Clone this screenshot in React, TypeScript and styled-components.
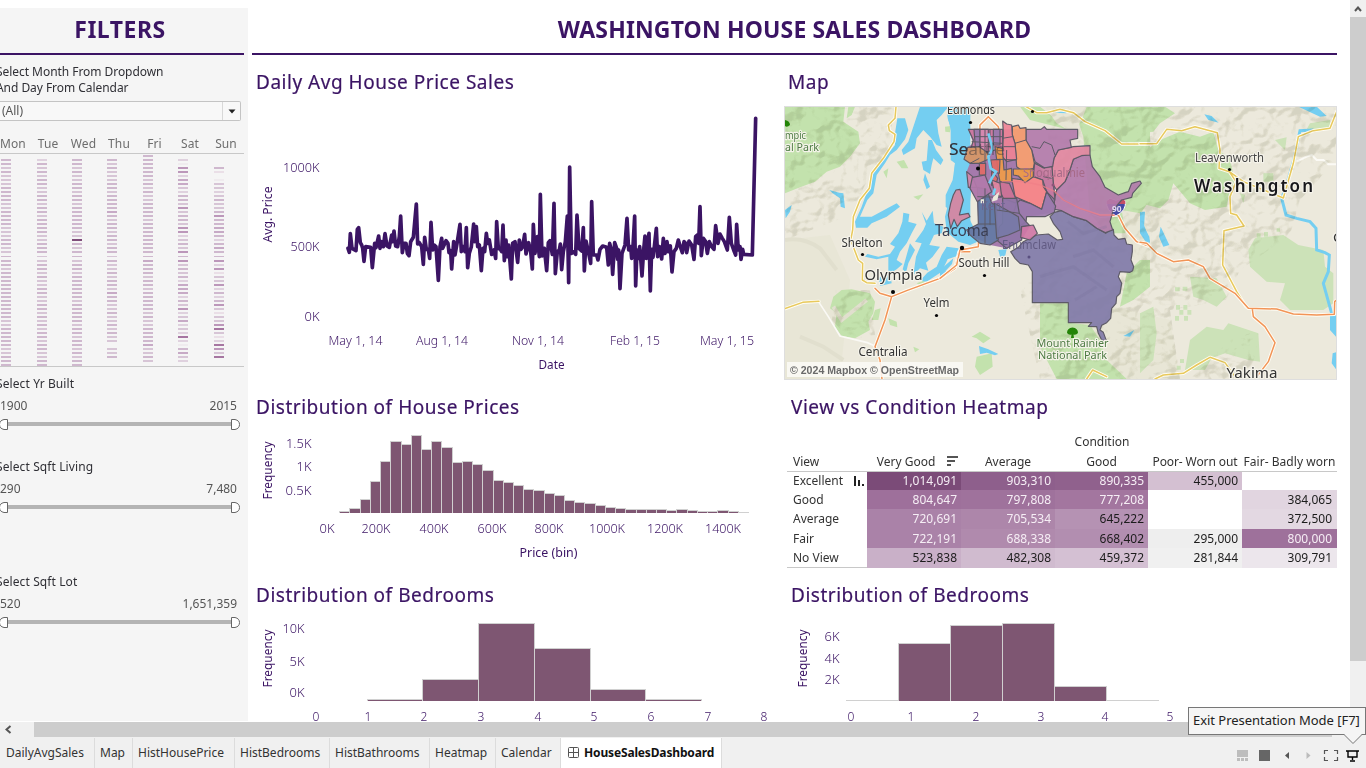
import React from "react";
import styled, { createGlobalStyle } from "styled-components";

const INK = "#3b1464";
const BAR = "#7e5672";
const SANS = '"Noto Sans", "Open Sans", sans-serif';

const GlobalStyle = createGlobalStyle`
  * { box-sizing: border-box; }
  body { margin: 0; background: #fff; font-family: ${SANS}; overflow: hidden; }
  svg { display: block; }
`;

const Page = styled.div`
  width: 1366px;
  height: 768px;
  display: grid;
  grid-template-rows: 722px 16px 30px;
  overflow: hidden;
  background: #fff;
`;
const Viewport = styled.div`
  display: grid;
  grid-template-columns: 248px 1fr 16px;
  overflow: hidden;
`;

/* ---------- filters ---------- */
const Filters = styled.aside`
  margin-top: 8px;
  height: 713px;
  background: #f5f5f5;
  overflow: hidden;
`;
const BarTitle = styled.h1<{ $space: number; $w: number; $indent?: number }>`
  margin: 0;
  height: 47px;
  width: ${(p) => p.$w}px;
  padding-right: ${(p) => p.$indent ?? 0}px;
  border-bottom: 2px solid ${INK};
  font-size: 23px;
  font-weight: 700;
  line-height: 43px;
  letter-spacing: ${(p) => p.$space}px;
  text-align: center;
  white-space: nowrap;
  color: ${INK};
`;
const FilterText = styled.p<{ $top?: number; $space?: number }>`
  margin: ${(p) => p.$top ?? 0}px 0 0 -4px;
  font-size: 12px;
  line-height: 16px;
  letter-spacing: ${(p) => p.$space ?? 0.1}px;
  color: #2f2f35;
  white-space: pre-line;
`;
const Dropdown = styled.div`
  margin-top: 5px;
  width: 241px;
  height: 20px;
  display: flex;
  border: 1px solid #c4c4c4;
  border-left: 0;
  border-radius: 0 2px 2px 0;
  background: #f8f8f8;
  font-size: 12px;
  line-height: 18px;
  color: #555;
`;
const DropdownValue = styled.span`
  flex: 1;
  padding-left: 2px;
`;
const DropdownArrow = styled.span`
  width: 18px;
  display: flex;
  align-items: center;
  justify-content: center;
  border-left: 1px solid #d8d8d8;
`;
const Days = styled.div`
  width: 244px;
  height: 20px;
  margin-top: 13px;
  display: grid;
  grid-template-columns: 30px 36px 35px 36px 35px 36px 36px;
  border-bottom: 1px solid #c8c8c8;
  font-size: 12px;
  line-height: 20px;
  letter-spacing: 0.1px;
  color: #6d6d6d;
  text-align: center;
  white-space: nowrap;

  span:first-child { text-align: left; }
`;
const Range = styled.div<{ $top: number }>`
  margin-top: ${(p) => p.$top}px;
  height: 60px;
`;
const RangeValues = styled.div`
  width: 237px;
  display: flex;
  justify-content: space-between;
  margin-top: 5px;
  font-size: 12px;
  line-height: 18px;
  color: #555;
`;
const SliderTrack = styled.svg`
  margin-top: 1px;
`;

const CAL = [
  "05545444555544555544455445554555555555555445555544555",
  "03545455445545545555445554455454455445545454554554455",
  "05545445545545555554495455455455555545555545545545455",
  "05454445545555654554554554544545546554454454544044500",
  "55555545454455554555555555655545545555545445555644540",
  "03177366435547455477345475745453666354734634383156430",
  "00052014434544575566535655737244735357424478423874800",
];
const CAL_X = [1, 37, 72, 107, 143, 178, 214];
const LEVEL = ["", "#efebee", "#eadfe7", "#dfd1de", "#d7c5d6", "#cfb8ce", "#c7aac6", "#bc97ba", "#a676a1", "#7f4d7a"];

function Calendar() {
  return (
    <svg width="248" height="213" viewBox="0 154 248 213" shapeRendering="crispEdges">
      {CAL.map((col, c) =>
        col.split("").map((v, r) => {
          if (v === "0") return null;
          const y = r < 25 ? 155 + r * 4 : r === 25 ? 256 : 260 + (r - 26) * 4;
          return <rect key={r} x={CAL_X[c]} y={y} width="10" height={r === 25 ? 1 : 2} fill={LEVEL[Number(v)]} />;
        })
      )}
      <rect x="0" y="366" width="244" height="1" fill="#c8c8c8" />
    </svg>
  );
}

function RangeFilter({ title, min, max, top }: { title: string; min: string; max: string; top: number }) {
  return (
    <Range $top={top}>
      <FilterText>{title}</FilterText>
      <RangeValues>
        <span>{min}</span>
        <span>{max}</span>
      </RangeValues>
      <SliderTrack width="248" height="16" viewBox="0 0 248 16">
        <rect x="7" y="6" width="225" height="4" fill="#b4b4b4" />
        <path d="M7.500 3.500H4Q-.5 4.500-.5 8.500Q-.5 12.500 4 13.500H7.500Z" fill="#fff" stroke="#666" />
        <path d="M231.500 3.500H235Q239.500 4.500 239.500 8.500Q239.500 12.500 235 13.500H231.500Z" fill="#fff" stroke="#666" />
      </SliderTrack>
    </Range>
  );
}

/* ---------- dashboard ---------- */
const Dashboard = styled.main`
  padding: 8px 13px 0 4px;
  overflow: hidden;
`;
const Grid = styled.div`
  display: grid;
  grid-template-columns: 532px 553px;
  grid-template-rows: 325px 188px 154px;
`;
const Panel = styled.section`
  padding-top: 9px;
  overflow: hidden;
`;
const PanelTitle = styled.h2<{ $left: number; $space?: number }>`
  margin: 0;
  height: 36px;
  padding-left: ${(p) => p.$left}px;
  font-size: 19px;
  font-weight: 400;
  line-height: 36px;
  letter-spacing: ${(p) => p.$space ?? 0.52}px;
  color: ${INK};
  -webkit-text-stroke: 0.2px ${INK};
  white-space: nowrap;
`;

type LabelProps = {
  x: number; y: number; w?: number; anchor?: "start" | "middle" | "end";
  size?: number; fill?: string; weight?: number; rotate?: boolean; children: string;
};
function Label({ x, y, w, anchor = "middle", size = 12, fill = INK, weight = 400, rotate, children }: LabelProps) {
  return (
    <text x={x} y={y} textLength={w} lengthAdjust="spacingAndGlyphs" textAnchor={anchor} fontSize={size} fill={fill}
      fontWeight={weight} transform={rotate ? `rotate(-90 ${x} ${y})` : undefined}>
      {children}
    </text>
  );
}
function Tick(props: LabelProps) {
  return <Label weight={300} {...props} />;
}

const SERIES =
  "294,565 298,577 301,521 306,565 318,572 322,508 326,503 331,548 335,555 338,565 342,604 347,560 362,562 367,623 374,550 378,563 386,528 390,565 395,545 400,560 405,521 411,558 418,562 425,525 428,545 432,513 437,558 443,560 448,530 452,468 457,578 462,550 468,550 472,580 477,587 482,545 490,532 499,432 503,552 508,548 515,560 520,613 524,532 529,568 535,568 539,595 543,487 548,570 552,555 558,560 565,661 570,560 575,535 578,565 588,542 594,550 597,578 602,572 605,627 611,545 615,585 622,545 630,493 634,575 640,560 645,575 649,503 653,623 658,580 664,560 671,492 674,545 679,500 683,560 688,555 694,632 699,565 704,575 709,520 713,550 718,540 725,583 732,570 737,595 740,485 745,565 751,568 755,575 759,495 763,602 768,540 771,590 776,555 784,657 788,550 795,545 803,607 808,540 813,568 818,560 824,523 828,582 836,548 842,575 847,627 850,493 855,580 862,530 868,590 871,403 876,588 883,565 890,632 895,548 900,542 907,583 912,430 916,641 922,575 928,570 931,552 935,629 940,575 946,545 952,468 956,668 959,321 964,580 972,575 977,583 981,465 987,565 995,573 1000,503 1003,633 1008,543 1015,575 1022,610 1025,425 1030,585 1040,585 1044,600 1050,568 1058,558 1070,562 1075,615 1079,550 1084,570 1088,643 1094,548 1100,565 1103,598 1106,570 1110,686 1116,580 1125,555 1131,475 1136,570 1142,560 1145,595 1149,560 1154,468 1157,678 1161,570 1165,595 1169,560 1172,595 1176,648 1181,570 1185,528 1189,595 1193,555 1197,520 1201,693 1205,568 1209,592 1213,560 1219,505 1223,590 1228,560 1235,597 1240,535 1245,580 1251,545 1255,575 1261,558 1266,636 1272,575 1279,565 1285,540 1291,560 1297,578 1302,545 1307,550 1310,578 1317,543 1325,555 1332,598 1337,530 1342,525 1346,550 1350,440 1354,587 1360,535 1367,545 1372,580 1378,545 1385,560 1392,568 1397,497 1404,550 1410,522 1417,535 1423,545 1432,570 1438,472 1444,550 1451,570 1457,585 1460,493 1465,570 1470,560 1473,598 1478,568 1481,583 1507,585 1517,175";

function PriceLine() {
  return (
    <svg width="532" height="280" viewBox="252 100 532 280">
      <Tick x={319.500} y={172} w={36.500} anchor="end">1000K</Tick>
      <Tick x={319.500} y={251} w={29} anchor="end">500K</Tick>
      <Tick x={319.500} y={321} w={15} anchor="end">0K</Tick>
      <Label x={272} y={214.500} w={56} rotate>Avg. Price</Label>
      <polyline points={SERIES} transform="translate(250 60) scale(.33333)" fill="none" stroke={INK} strokeWidth="11" strokeLinejoin="round" strokeLinecap="round" />
      <Tick x={355.500} y={345} w={54}>May 1, 14</Tick>
      <Tick x={442} y={345} w={52}>Aug 1, 14</Tick>
      <Tick x={538} y={345} w={52}>Nov 1, 14</Tick>
      <Tick x={635} y={345} w={50}>Feb 1, 15</Tick>
      <Tick x={727} y={345} w={54}>May 1, 15</Tick>
      <Label x={551.500} y={369} w={26}>Date</Label>
    </svg>
  );
}

function Bars({ edges, tops, base }: { edges: number[]; tops: number[]; base: number }) {
  return (
    <g shapeRendering="crispEdges">
      {tops.map((t, i) => {
        const x = Math.round(edges[i]);
        const next = Math.round(edges[i + 1]);
        return (
          <g key={i}>
            <rect x={x} y={t} width={next - x + 1} height={base - t} fill="#d0d0d0" />
            <rect x={x + 1} y={t + 1} width={next - x - 1} height={Math.max(0, base - t - 1)} fill={BAR} />
          </g>
        );
      })}
      {tops.map((t, i) => {
        const top = Math.min(t, tops[i - 1] ?? t);
        return <rect key={i} x={Math.round(edges[i])} y={top} width="1" height={base - top} fill="#d0d0d0" />;
      })}
    </g>
  );
}

const PRICE_TOPS = [364, 355, 328, 274, 213, 154, 163, 136, 178, 154, 172, 217, 213, 223, 241, 271, 277, 286, 298, 301, 310, 316, 331, 337, 340, 346, 352, 355, 358, 358, 358, 358, 361, 358, 361, 364, 364, 361, 364, 367].map((v) => 390 + Math.floor(v / 3));
const PRICE_EDGES = Array.from({ length: 41 }, (_, i) => 339.200 + i * 10.220);

function PriceHistogram() {
  return (
    <svg width="532" height="143" viewBox="252 425 532 143">
      <Tick x={311.500} y={448} w={25.500} anchor="end">1.5K</Tick>
      <Tick x={311.500} y={471} w={15} anchor="end">1K</Tick>
      <Tick x={311.500} y={495} w={26} anchor="end">0.5K</Tick>
      <Label x={272} y={470.500} w={58} rotate>Frequency</Label>
      <Bars edges={PRICE_EDGES} tops={PRICE_TOPS} base={513} />
      {["0K", "200K", "400K", "600K", "800K", "1000K", "1200K", "1400K"].map((t, i) => (
        <Tick key={t} x={[327, 376, 434, 492, 549, 607, 665, 723][i]} y={533} w={[15, 29, 29, 29, 29, 36, 36, 36][i]}>{t}</Tick>
      ))}
      <Label x={548.500} y={557} w={58}>Price (bin)</Label>
    </svg>
  );
}

function BedroomHistogram() {
  return (
    <svg width="532" height="109" viewBox="252 613 532 109">
      <Tick x={304.500} y={633} w={22} anchor="end">10K</Tick>
      <Tick x={304.500} y={666} w={15} anchor="end">5K</Tick>
      <Tick x={304.500} y={697} w={15} anchor="end">0K</Tick>
      <Label x={272} y={658.500} w={58} rotate>Frequency</Label>
      <Bars edges={[367, 422, 478, 534, 590, 645, 701]} tops={[699, 679, 623, 648, 689, 699]} base={701} />
      {[316, 368, 424, 481, 538, 594, 651, 708, 764].map((x, i) => (
        <Tick key={x} x={x} y={721}>{String(i)}</Tick>
      ))}
    </svg>
  );
}

function BathroomHistogram() {
  return (
    <svg width="553" height="109" viewBox="784 613 553 109">
      <Tick x={839.500} y={641} w={15} anchor="end">6K</Tick>
      <Tick x={839.500} y={663} w={15} anchor="end">4K</Tick>
      <Tick x={839.500} y={684} w={15} anchor="end">2K</Tick>
      <Label x={807} y={658.500} w={58} rotate>Frequency</Label>
      <rect x="846" y="700" width="313" height="1" fill="#d0d0d0" />
      <Bars edges={[898, 950, 1002, 1054, 1106]} tops={[643, 625, 623, 686]} base={701} />
      {[851, 911, 976, 1041, 1105, 1170].map((x, i) => (
        <Tick key={x} x={x} y={721}>{String(i)}</Tick>
      ))}
    </svg>
  );
}

/* ---------- heatmap ---------- */
const Table = styled.div`
  margin-left: 3px;
  padding-top: 8px;
  width: 550px;
  font-size: 12px;
  color: #333;
`;
const Over = styled.div`
  height: 18px;
  padding-left: 80px;
  line-height: 18px;
  text-align: center;
`;
const HeatRow = styled.div<{ $head?: boolean; $h: number; $last?: boolean }>`
  display: grid;
  grid-template-columns: 80px 94px 94px 93px 94px 95px;
  height: ${(p) => p.$h}px;
  padding-top: ${(p) => (p.$head ? 1 : 0)}px;
  line-height: ${(p) => (p.$head ? 20 : p.$h)}px;
  border-bottom: ${(p) => (p.$head || p.$last ? "1px solid #c8c8c8" : "0")};
  white-space: nowrap;
`;
const RowName = styled.div`
  padding: 0 2px 0 6px;
  display: flex;
  justify-content: space-between;
  align-items: center;
`;
const ColName = styled.div<{ $space?: number; $left?: number }>`
  display: flex;
  align-items: center;
  justify-content: center;
  gap: 12px;
  padding-left: ${(p) => p.$left ?? 0}px;
  letter-spacing: ${(p) => p.$space ?? 0}px;
`;
const SortIcon = styled.svg`
  margin-bottom: 3px;
`;
const Cell = styled.div<{ $bg: string; $dark?: boolean; $edge?: boolean }>`
  background: ${(p) => p.$bg};
  color: ${(p) => (p.$dark ? "#1c1c1c" : "#f6eef5")};
  padding-right: ${(p) => (p.$edge ? 5 : 4)}px;
  text-align: right;
`;
type HeatCell = [string, string, boolean?];
const HEAT: { name: string; h: number; cells: HeatCell[] }[] = [
  { name: "Excellent", h: 18, cells: [["1,014,091", "#7b4b78"], ["903,310", "#8e5f8c"], ["890,335", "#90618d"], ["455,000", "#d4c0d2", true], ["", "#fff"]] },
  { name: "Good", h: 19, cells: [["804,647", "#9e709b"], ["797,808", "#9f729c"], ["777,208", "#a3769f"], ["", "#fff"], ["384,065", "#e1d5e0", true]] },
  { name: "Average", h: 20, cells: [["720,691", "#aa82a8"], ["705,534", "#ad86aa"], ["645,222", "#b592b3", true], ["", "#fff"], ["372,500", "#e3d8e2", true]] },
  { name: "Fair", h: 19, cells: [["722,191", "#aa82a8"], ["688,338", "#b08aad"], ["668,402", "#b28eb0", true], ["295,000", "#eeeeee", true], ["800,000", "#9e719b"]] },
  { name: "No View", h: 20, cells: [["523,838", "#c9b0c8", true], ["482,308", "#d0bbcf", true], ["459,372", "#d4c0d3", true], ["281,844", "#f0f0f0", true], ["309,791", "#ece6ec", true]] },
];

function Heatmap() {
  return (
    <Table>
      <Over>Condition</Over>
      <HeatRow $head $h={21}>
        <RowName>View</RowName>
        <ColName $left={7}>
          Very Good
          <SortIcon width="11" height="10" shapeRendering="crispEdges"><path d="M0 1H11M0 5H8M0 9H4" stroke="#555" strokeWidth="2" /></SortIcon>
        </ColName>
        <ColName>Average</ColName>
        <ColName>Good</ColName>
        <ColName $space={-0.1}>Poor- Worn out</ColName>
        <ColName $space={0.05}>Fair- Badly worn</ColName>
      </HeatRow>
      {HEAT.map((row, i) => (
        <HeatRow key={row.name} $h={row.h} $last={i === 4}>
          <RowName>
            {row.name}
            {i === 0 && <svg width="12" height="11" shapeRendering="crispEdges"><path d="M2 0V10M6 4V10M10 8V10" stroke="#222" strokeWidth="2" /></svg>}
          </RowName>
          {row.cells.map(([v, bg, dark], c) => (
            <Cell key={c} $bg={bg} $dark={dark} $edge={c === 4}>{v}</Cell>
          ))}
        </HeatRow>
      ))}
    </Table>
  );
}

/* ---------- map ---------- */
const MapFrame = styled.div`
  margin-top: 6px;
  height: 274px;
  border: 1px solid #dedede;
  overflow: hidden;
`;
const ReliefLayer = styled.g`
  mix-blend-mode: multiply;
  opacity: 0.36;
`;
const GREEN = "#c3e2ad";
const PALE_GREEN = "#cce2b8";
const WATER = "#74cef1";

function Road({ d, color = "#e8c95c" }: { d: string; color?: string }) {
  return (
    <g fill="none" strokeLinejoin="round" strokeLinecap="round">
      <path d={d} stroke="#fffdf4" strokeWidth="10" />
      <path d={d} stroke={color} strokeWidth="4.500" />
    </g>
  );
}
const ORANGE = "#f29457";

/* Whole urban area, under the single postcode zones. */
const URBAN = "M85 88H258V120L284 188L345 250V337L260 350L258 365L270 378L245 420L200 445L150 435L80 400L115 372L112 300L85 262L80 215L90 190L72 178L83 142L100 130Z";

const ZONES: [string, string][] = [
  ["#8079a8", "M343 337L365 332L400 350L440 362L470 385L497 400L507 392L520 388L522 405L535 418L555 415L560 432L577 435L577 455L573 480L581 500L578 512L570 517L540 515L535 530L545 550L540 580L530 590L528 610L515 625L512 655L500 668L485 676L480 690L490 697L499 722L485 720L475 700L470 680L445 679L455 668H385V608H277V515L265 495L240 490L225 475L212 455L235 442L250 425L290 405L325 402L352 420L368 418L360 395L340 370L330 350Z"],
  ["#b27aaa", "M350 270L375 245L388 215L400 178L425 165H450L457 200L480 230L495 262L535 285L555 278L565 275L575 250L600 243L604 250L578 280L575 292L545 300L532 315L520 330L510 365L518 390L497 398L470 385L440 362L400 350L365 332L343 328L343 300Z"],
  ["#e1859f", "M335 200L342 175L355 150L400 140L450 137V165L425 167L400 178L388 215L375 245L350 270L340 255Z"],
  ["#b27aaa", "M258 88H303L313 80L320 88H413V115L390 120L394 142L355 150L342 175L338 200L315 205L285 185L275 150L258 125Z"],
  ["#f8a06f", "M217 80L235 75L240 85L258 83V120L275 150L283 190L280 206L250 215L230 200L225 130L217 105Z"],
  ["#ee8295", "M188 63L200 72L215 75L217 105L225 130L230 178L200 185L187 170L190 100Z"],
  ["#c77aa0", "M284 188L310 204L336 200L340 250L345 300L325 280L320 275L308 240L280 230Z"],
  ["#fb8888", "M215 235L250 240L280 230L308 240L310 260L320 275L305 328L270 310L225 290Z"],
  ["#9b7aac", "M230 310L240 300L270 310L305 328L320 275L347 318L343 337L315 350L260 350L258 365L240 378L220 340Z"],
  ["#f09b45", "M220 207H280V230L255 248L235 228L220 225Z"],
  ["#cd7295", "M180 245L208 250L225 290L230 310L190 295L176 265Z"],
  ["#8e75a7", "M188 295H230L238 340L258 365L270 378L245 380V420L200 445L170 420L178 380L188 370Z"],
  ["#5d78a5", "M112 262L140 268L155 310L170 315L170 375L115 375Z"],
  ["#6379a4", "M80 390L115 372H170L175 420L150 435L120 430L90 405Z"],
  ["#777aa7", "M163 310L200 330L235 350L240 390L205 405L170 415Z"],
  ["#cf77a5", "M245 380L280 375L292 400L270 420L242 412Z"],
  ["#cf789f", "M85 88H188V145L145 155L92 150L100 120Z"],
  ["#967aac", "M102 88H120V140H106ZM160 88H180V135H160Z"],
  ["#d78ab0", "M120 88H145V155H120Z"],
  ["#d69765", "M83 142L118 140L145 160V178L118 190L90 190L72 178Z"],
  ["#f09b48", "M165 140L187 145L192 210L215 205V245L180 245L176 225Z"],
  ["#e26a65", "M152 180L180 178L178 220L158 216ZM118 190H137V225H118ZM155 210L173 235L168 252L155 256Z"],
  ["#d487aa", "M80 215L98 230L110 262L85 262Z"],
  ["#b27aaa", "M97 232L135 225L155 275L112 305L90 265Z"],
  ["#e1859f", "M155 240L180 250L185 290L165 285Z"],
  ["#d8849f", "M48 270L60 268L70 300L58 345L85 340L90 350L65 362L52 380L42 358L32 385L25 345L32 310L40 285Z"],
];

const CITY_DOTS: [number, number, number][] = [
  [862.500, 254.500, 1.600], [893, 292, 2], [936.500, 315.500, 1.600], [984.500, 275.500, 1.600], [962, 248, 2.200],
  [970.500, 122.500, 1.600], [1032.500, 111.500, 1.600], [1229.500, 169.500, 1.600], [978, 168.500, 2],
];

function WashingtonMap() {
  return (
    <svg width="551" height="272" viewBox="785 107 551 272">
      <defs>
        <filter id="relief" x="0" y="0" width="100%" height="100%">
          <feTurbulence type="fractalNoise" baseFrequency="0.04 0.046" numOctaves="3" seed="11" />
          <feColorMatrix values="0 0 0 0 0  0 0 0 0 0  0 0 0 0 0  1.8 0 0 0 -.4" />
          <feDiffuseLighting surfaceScale="11" diffuseConstant="1.150" lightingColor="#fff">
            <feDistantLight azimuth="225" elevation="60" />
          </feDiffuseLighting>
          <feComponentTransfer>
            <feFuncR type="discrete" tableValues=".5 .55 .6 .68 .76 .84 .9 .96 1 1" />
            <feFuncG type="discrete" tableValues=".5 .55 .6 .68 .76 .84 .9 .96 1 1" />
            <feFuncB type="discrete" tableValues=".4 .45 .5 .58 .68 .78 .86 .94 1 1" />
          </feComponentTransfer>
        </filter>
        <clipPath id="mountains">
          <path d="M785 107H895L888 150L865 185L850 215L785 240ZM1045 107H1336V160L1300 200L1290 235L1240 270L1226 300L1170 310L1180 379H1040L1020 290L1060 250Z M1230 340L1260 330L1250 379H1190Z M835 290L870 290L875 335L850 340L832 320Z" />
        </clipPath>
        <clipPath id="west-of-shore">
          <rect x="940" y="130" width="27.500" height="40" />
        </clipPath>
      </defs>
      <rect x="785" y="107" width="551" height="272" fill="#ece9dc" />
      <path d="M785 240L830 235L850 280L840 379H785Z M1040 290L1060 379H1180L1170 320Z" fill="#e8e6d6" />
      <g transform="translate(780 100) scale(.33333)">
        <path d="M15 20H195L190 65L235 95L240 130L210 170L180 200L140 215L105 245L60 262L15 280Z" fill={GREEN} />
        <path d="M205 20H225L215 45L200 55ZM400 290L430 283L415 300ZM350 185L372 180L385 205L365 205ZM310 215L325 205L320 235ZM495 80L512 78L510 97L496 95ZM410 550L435 540L430 562Z" fill={GREEN} />
        <path d="M185 570L215 568L270 580L285 605L280 640L265 665L270 690L225 715L185 708L165 680L170 640L150 625L160 590ZM285 630L302 625L295 660L275 660ZM325 655L350 665L352 682L330 675ZM400 740L418 748L405 757Z" fill={GREEN} />
        <path d="M15 420Q70 410 120 445L170 510M160 620L185 660L260 600M60 710L130 740L190 780" stroke="#e1dfce" strokeWidth="12" fill="none" />
        <path d="M352 55H375L385 90L375 118L350 150L330 165L315 190L290 225L280 280L262 300L240 350L275 350L350 310L360 320L320 350L275 370L262 383H228L225 365L245 320L270 250L280 220L310 180L345 135L345 100Z" fill={WATER} />
        <path d="M420 20H505L485 45L470 60L475 100L485 140L470 135L450 110L430 90L410 115L405 145L370 165L365 150L385 125L400 80Z" fill={WATER} />
        <path d="M445 120H456L468 150L490 180L482 195L460 175L455 195L450 222L430 210L425 185L440 182ZM435 220L450 260L440 268L430 240Z" fill={WATER} />
        <path d="M500 20H571V430L545 400L520 395L530 350L497 320V285L518 240L525 190L512 180V80L503 55Z" fill={WATER} />
        <path d="M370 338L388 342L385 365L410 372L395 400L380 430L360 455L350 480L368 492L350 508L330 520L335 550L300 558L295 535L325 515L325 470L290 478L255 470L262 462L295 470L330 462L345 440L330 432L355 400L367 365Z" fill={WATER} />
        <path d="M425 335L440 362L458 332L462 370L490 380L485 400L462 405L448 435L480 440L458 470L438 488L445 512L420 505L400 525L408 470L425 430L405 425L430 390L438 372Z" fill={WATER} />
        <path d="M500 440L535 445L540 465L503 478L485 515L440 545L420 542L442 518L470 500L485 465ZM390 430L405 450L385 490L378 518L368 508L380 465ZM480 520L500 512L490 530Z" fill={WATER} />
        <path d="M148 270L178 278L190 280L195 325L182 320L180 295L158 280ZM15 330L35 315L30 335L17 355Z" fill={WATER} />
        <path d="M115 604L145 650L180 708L262 728L290 740" fill="none" stroke="#faf9f5" strokeWidth="5" />
        <Road d="M348 20L345 55L325 75L328 92L345 103L342 125L310 175L275 220L268 265L240 300L220 350L218 390L212 420L235 480L248 490L247 540L260 548L285 550M15 626L68 607L117 604" />
        <Road color={ORANGE} d="M285 565L300 580L335 590L380 572L480 535L525 505L537 455H570M335 590L315 660L285 740L300 780L306 837" />
      </g>
      <g transform="translate(940 100) scale(.33333)">
        <path d="M20 20H65L70 80L80 170L95 260L85 350L100 380L125 420L90 435L55 425L20 395L15 350L40 250L45 190L35 100L25 60Z" fill={WATER} />
        <path d="M0 510L40 475L36 492L0 530ZM175 450L200 448L195 470L180 470Z" fill={WATER} />
        <path d="M300 610H385V668L450 675L480 720L500 780L560 837H350L300 740ZM400 20H630V300L605 335L580 400L530 400L500 400L450 340L430 110ZM560 520L600 480L630 470V560L580 600L540 620ZM240 20H300L390 90L270 60ZM95 710L120 695L152 715L130 730L110 715ZM110 770L155 760L158 800L120 825L105 800Z" fill={GREEN} />
        <path d="M315 20H440L425 60L400 100L350 70ZM545 330L600 340L630 400V480L580 480L560 420Z" fill="#e8e6d6" />
        <path d="M605 335L615 335L612 380L628 410L630 430L610 410L600 370ZM550 708L583 690L570 710ZM117 738L145 748L175 762L165 766L140 758L120 762ZM400 140L448 135L448 142ZM345 38L380 40L375 33Z" fill={WATER} />
        <Road d="M258 20L290 38H320L360 28L400 38L435 65L495 92L545 132H632M440 837L458 810L500 830" />
        <Road color={ORANGE} d="M145 50L120 75L118 160M145 50L175 80L185 150L180 240L220 235L300 255L345 275L370 300L420 325L480 348L535 345L555 385L590 425L630 440M0 535L50 495L60 450L115 440L118 350" />
      </g>
      <g transform="translate(1140 100) scale(.33333)">
        <path d="M0 20H75L105 40L60 70L40 95L0 100ZM0 165L60 120L120 95L180 110L220 95L235 150L270 175L280 225L270 270L260 320L195 330L150 310L100 250L85 300L60 325L0 310Z" fill={GREEN} />
        <path d="M345 415L430 405L475 435L550 450L555 500L580 520V610L550 630H450L420 600L435 550L380 545L330 500L325 450ZM150 530L230 535L260 590L230 620L190 600L160 590ZM150 720L200 680L250 690L265 670L355 700L360 785L325 780L255 760L215 775L195 810H135ZM0 640L40 620L50 700L40 780L0 820ZM510 70L570 60V90L500 88ZM405 120L440 112L435 150ZM300 280L315 285L310 310ZM370 220H400V245H370ZM270 235H288V262H270Z" fill={PALE_GREEN} />
        <path d="M108 615h12v14h-12zM130 615h12v14h-12zM118 630h12v14h-12zM142 630h12v14h-12zM105 648h12v14h-12zM132 648h12v14h-12zM350 400h12v14h-12zM372 396h12v14h-12zM120 777h12v12h-12zM142 785h12v12h-12zM110 797h12v12h-12zM410 385h10v10h-10zM105 562h14v12h-14zM128 560h14v12h-14z" fill={PALE_GREEN} />
        <path d="M475 20H530L560 48L540 50ZM193 43L215 48L236 68L205 60ZM62 380L88 435L70 440L57 410ZM0 335L10 340L12 375L30 425L20 430L0 400ZM570 645H588V710L570 690ZM578 760L588 757V808L575 790Z" fill={WATER} />
        <path d="M520 90L480 92L472 130L460 185L440 255L425 295L438 345L470 355L510 365L528 385L530 450L555 458L568 465L565 515L550 550L575 640" fill="none" stroke={WATER} strokeWidth="9" />
        <path d="M470 185L500 170L515 165L530 180L550 180L565 193L590 193" fill="none" stroke="#fbfaf5" strokeWidth="6" />
        <Road d="M0 131H50L80 88L125 92L165 80L232 98L240 150L237 205L268 215L310 245L430 294L460 190L475 110L520 92L570 85L590 35M268 215L288 245L270 290L272 340L290 345L312 378L252 392L248 495L290 575L318 620M45 837L70 825L130 820L170 795L210 772L255 788L290 837" />
        <Road color={ORANGE} d="M0 427L20 430L50 460L100 485L145 480L190 500L210 535L285 580L325 625L410 627L460 642L530 645L583 643L584 605L590 600M337 627L340 650L375 680L405 728L385 785L345 837" />
      </g>
      <ReliefLayer clipPath="url(#mountains)">
        <rect x="785" y="107" width="551" height="272" filter="url(#relief)" />
      </ReliefLayer>
      <g stroke="#f5f3ea" strokeWidth="2" paintOrder="stroke" strokeLinejoin="round">
        <Label x={971} y={114} w={48} fill="#333">Edmonds</Label>
      </g>
      <g transform="translate(940 100) scale(.33333)" fill="none">
        <path d="M500 303L510 296L528 302L546 296L556 303Q560 332 528 348Q497 332 500 303Z" fill="#4549a4" stroke="#fff" strokeWidth="3" />
        <path d="M500 303L510 296L528 302L546 296L556 303V312H500Z" fill="#c44e65" />
        <path d={URBAN} fill="#a57aac" />
        {ZONES.map(([fill, d]) => (
          <path key={d} d={d} fill={fill} fillOpacity=".92" stroke="#5d5a66" strokeWidth="3.500" strokeLinejoin="round" />
        ))}
        <text x="530" y="335" fontSize="25" fontWeight="700" textAnchor="middle" fill="#e4dcf0">90</text>
        <path d="M283 190L315 205M225 130L258 120M187 115L217 110M190 140H225M102 110H188M95 125L187 130M135 88V190M150 88V145M180 178L230 180M200 150L198 240M112 290L185 292M170 330L238 340M135 265V430M150 310V375M90 190L118 175M275 140L300 145L312 125L335 135L345 165M310 230L335 235" stroke="#5d5a66" strokeWidth="3" />
        <path d="M145 100L158 145L145 170L152 205L168 215L155 235L148 250M165 265L160 285" stroke={WATER} strokeWidth="8" />
        <path d="M160 290L178 275L172 300L155 305ZM122 298H132V310H122Z" fill="#ece9dc" />
        <path d="M185 245L250 245L300 255L345 275L370 300L420 325L480 345H525" stroke="#ef7f88" strokeWidth="4" opacity=".7" />
        <path d="M383 365L430 400L500 380M400 470L460 450L520 500M300 530L400 500L500 570M405 600L470 560" stroke="#6f6b95" strokeWidth="9" opacity=".17" />
      </g>
      <g>
        <Label x={1054} y={177} w={62} fill="#a66a88">Snoqualmie</Label>
        <Label x={993} y={210} w={24} fill="#6d6590">Kent</Label>
        <Label x={1029} y={249} w={54} fill="#625b83">Enumclaw</Label>
        <g clipPath="url(#west-of-shore)">
          <Label x={977} y={155} w={56} size={17} fill="#33333a">Seattle</Label>
        </g>
        <g opacity=".45">
          <Label x={977} y={155} w={56} size={17} fill="#33333a">Seattle</Label>
        </g>
        <Label x={962} y={236} w={54} size={15.500} fill="#3a3e52">Tacoma</Label>
        <circle cx="1053" cy="185" r="1.500" fill="#8c5578" />
        <circle cx="1029" cy="257" r="1.500" fill="#5a5080" />
      </g>
      <g stroke="#f5f3ea" strokeWidth="2.500" paintOrder="stroke" strokeLinejoin="round">
        <Label x={862} y={247} w={41} fill="#333">Shelton</Label>
        <Label x={893.500} y={280} w={58} size={15} fill="#333">Olympia</Label>
        <Label x={936.500} y={307} w={26} fill="#333">Yelm</Label>
        <Label x={883} y={356} w={49} fill="#333">Centralia</Label>
        <Label x={984} y={267} w={51} fill="#333">South Hill</Label>
        <Label x={1229.500} y={162} w={69} fill="#444">Leavenworth</Label>
        <text x="1194" y="192" fontSize="17" fontWeight="600" fill="#17171b" textLength="119" lengthAdjust="spacing">Washington</text>
        <Label x={1252} y={378} w={51} size={14.500} fill="#333">Yakima</Label>
        <Label x={1337.500} y={242} w={9} fill="#333">C</Label>
        <Label x={1072.500} y={347} w={72} size={11.500} fill="#4d7b43">Mount Rainier</Label>
        <Label x={1072.500} y={359} w={69} size={11.500} fill="#4d7b43">National Park</Label>
        <Label x={785} y={139} w={21} anchor="start" size={11.500} fill="#4d7b43">mpic</Label>
        <Label x={785} y={151} w={34} anchor="start" size={11.500} fill="#4d7b43">al Park</Label>
      </g>
      {CITY_DOTS.map(([x, y, r]) => (
        <circle key={x} cx={x} cy={y} r={r} fill="#050505" />
      ))}
      <path d="M1067 333Q1067 328 1072.500 327.500Q1078 328 1078 333Q1076 335.500 1073.500 334.500L1074 338H1071L1071.500 334.500Q1069 335.500 1067 333Z" fill="#238407" />
      <path d="M785 120Q790 121 790 125Q787 128 785 126Z" fill="#238407" />
      <rect x="787" y="362" width="176" height="15" fill="#fbfaf7" fillOpacity=".85" />
      <text x="790" y="374" fontFamily='"Liberation Sans", Arial, sans-serif' fontSize="11" fontWeight="700" fill="#6a6a6a" textLength="169" lengthAdjust="spacingAndGlyphs">© 2024 Mapbox © OpenStreetMap</text>
    </svg>
  );
}

/* ---------- window chrome ---------- */
const VScroll = styled.div`
  background: #f0f0f0;
  display: flex;
  flex-direction: column;
`;
const VArrow = styled.div`
  height: 17px;
  display: flex;
  align-items: center;
  justify-content: center;
`;
const VThumb = styled.div`
  height: 644px;
  background: #cdcdcd;
`;
const HScroll = styled.div`
  display: flex;
  background: #f0f0f0;
`;
const HArrow = styled.div`
  width: 34px;
  padding: 3px 0 0 5px;
`;
const HThumb = styled.div`
  width: 1298px;
  height: 15px;
  background: #cdcdcd;
`;
const TabBar = styled.footer`
  display: flex;
  background: #f0f0f0;
`;
const Tab = styled.div<{ $w: number; $active?: boolean; $left?: number }>`
  width: ${(p) => p.$w}px;
  display: flex;
  align-items: center;
  gap: 5px;
  padding: 0 0 1px ${(p) => p.$left ?? 5}px;
  border-right: 1px solid #dcdcdc;
  background: ${(p) => (p.$active ? "#fff" : "transparent")};
  font-size: 12px;
  font-weight: ${(p) => (p.$active ? 700 : 400)};
  letter-spacing: ${(p) => (p.$active ? -0.15 : 0)}px;
  color: ${(p) => (p.$active ? "#111" : "#333")};
  white-space: nowrap;
`;
const Tools = styled.div`
  margin-left: auto;
`;
const Tip = styled.div`
  position: absolute;
  left: 1188px;
  top: 707px;
  width: 178px;
  height: 28px;
  border: 1px solid #777;
  background: #f5f5f5;
  padding-left: 4px;
  font-size: 13px;
  line-height: 25px;
  letter-spacing: -0.04px;
  color: #222;
  white-space: nowrap;
`;
const TipNotch = styled.svg`
  position: absolute;
  left: 155px;
  top: 26px;
`;

export default function App() {
  return (
    <>
      <GlobalStyle />
      <Page>
        <Viewport>
          <Filters>
            <BarTitle $w={244} $space={0.5} $indent={4}>FILTERS</BarTitle>
            <FilterText $top={9} $space={-0.05}>{"Select Month From Dropdown\nAnd Day From Calendar"}</FilterText>
            <Dropdown>
              <DropdownValue>(All)</DropdownValue>
              <DropdownArrow><svg width="8" height="5"><path d="M.5.5H7.500L4 4.500Z" fill="#222" /></svg></DropdownArrow>
            </Dropdown>
            <Days>
              {["Mon", "Tue", "Wed", "Thu", "Fri", "Sat", "Sun"].map((d) => <span key={d}>{d}</span>)}
            </Days>
            <Calendar />
            <RangeFilter title="Select Yr Built" min="1900" max="2015" top={9} />
            <RangeFilter title="Select Sqft Living" min="290" max="7,480" top={23} />
            <RangeFilter title="Select Sqft Lot" min="520" max="1,651,359" top={55} />
          </Filters>
          <Dashboard>
            <BarTitle $w={1085} $space={0.15}>WASHINGTON HOUSE SALES DASHBOARD</BarTitle>
            <Grid>
              <Panel>
                <PanelTitle $left={4}>Daily Avg House Price Sales</PanelTitle>
                <PriceLine />
              </Panel>
              <Panel>
                <PanelTitle $left={4}>Map</PanelTitle>
                <MapFrame><WashingtonMap /></MapFrame>
              </Panel>
              <Panel>
                <PanelTitle $left={4}>Distribution of House Prices</PanelTitle>
                <PriceHistogram />
              </Panel>
              <Panel>
                <PanelTitle $left={7}>View vs Condition Heatmap</PanelTitle>
                <Heatmap />
              </Panel>
              <Panel>
                <PanelTitle $left={4}>Distribution of Bedrooms</PanelTitle>
                <BedroomHistogram />
              </Panel>
              <Panel>
                <PanelTitle $left={7}>Distribution of Bedrooms</PanelTitle>
                <BathroomHistogram />
              </Panel>
            </Grid>
          </Dashboard>
          <VScroll>
            <VArrow><svg width="8" height="6"><path d="M1 5L4 1.500L7 5" fill="none" stroke="#555" strokeWidth="2" /></svg></VArrow>
            <VThumb />
          </VScroll>
        </Viewport>
        <HScroll>
          <HArrow><svg width="7" height="9"><path d="M5.500 1L1.500 4.500L5.500 8" fill="none" stroke="#555" strokeWidth="2" /></svg></HArrow>
          <HThumb />
        </HScroll>
        <TabBar>
          <Tab $w={95} $left={6}>DailyAvgSales</Tab>
          <Tab $w={38}>Map</Tab>
          <Tab $w={102}>HistHousePrice</Tab>
          <Tab $w={95}>HistBedrooms</Tab>
          <Tab $w={100}>HistBathrooms</Tab>
          <Tab $w={66}>Heatmap</Tab>
          <Tab $w={65}>Calendar</Tab>
          <Tab $w={161} $left={7} $active>
            <svg width="11" height="11" fill="none" stroke="#555"><rect x=".5" y=".5" width="10" height="10" rx="1" /><path d="M5.500 1V10M1 5.500H10" /></svg>
            HouseSalesDashboard
          </Tab>
          <Tools>
            <svg width="134" height="30" viewBox="1232 738 134 30">
              <path d="M1237 750H1248V757H1237ZM1237 758H1240V761H1237ZM1241 758H1244V761H1241ZM1245 758H1248V761H1245Z" fill="#bdbdbd" />
              <rect x="1259" y="750" width="11" height="11" fill="#666" />
              <path d="M1289 752V759L1285 755.500Z" fill="#555" />
              <path d="M1306.500 752V759L1310.500 755.500Z" fill="#bbb" />
              <path d="M1324.500 754V750.500H1328M1334 750.500H1337.500V754M1337.500 757V760.500H1334M1328 760.500H1324.500V757" fill="none" stroke="#555" strokeWidth="1.200" />
              <path d="M1346 751H1359M1348 751V757H1357V751M1352.500 757V760M1350 761H1355" fill="none" stroke="#000" strokeWidth="1.400" />
            </svg>
          </Tools>
        </TabBar>
        <Tip>
          Exit Presentation Mode [F7]
          <TipNotch width="18" height="11"><path d="M0 0L9 9L18 0Z" fill="#f5f5f5" /><path d="M0 .5L9 9.500L18 .5" fill="none" stroke="#777" /></TipNotch>
        </Tip>
      </Page>
    </>
  );
}
